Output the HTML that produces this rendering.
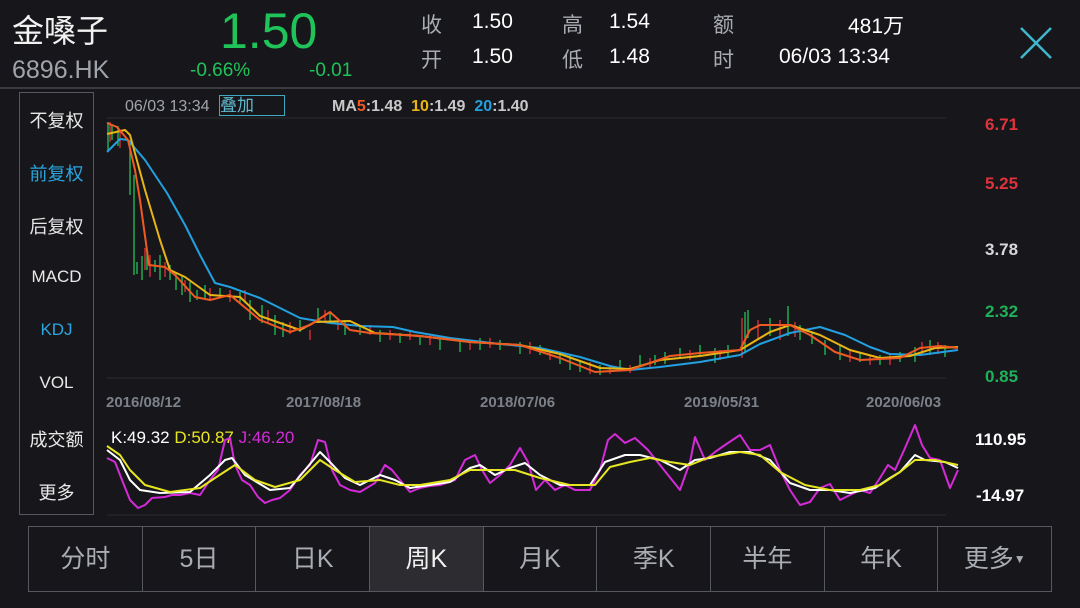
<!DOCTYPE html>
<html><head><meta charset="utf-8"><style>
body{margin:0;width:1080px;height:608px;background:#17171b;overflow:hidden;font-family:"Liberation Sans","Noto Sans CJK SC",sans-serif;position:relative;color:#fff}
.a{position:absolute;white-space:nowrap}
.g{color:#1fc35a}.lbl{color:#a9adb3}
.side{position:absolute;left:19px;top:92px;width:75px;height:423px;border:1px solid #55585e;box-sizing:border-box}
.side div{position:absolute;left:0;width:100%;text-align:center;font-size:18px;color:#e8e8e8}
.tabs{position:absolute;left:28px;top:526px;width:1024px;height:66px;border:1px solid #55585e;box-sizing:border-box;display:flex}
.tabs div{flex:1;border-right:1px solid #55585e;text-align:center;line-height:64px;font-size:25px;color:#a9adb3}
.tabs div:last-child{border-right:none}
</style></head><body>
<div class="a" style="left:12px;top:6px;font-size:32px;color:#f2f2f2">金嗓子</div>
<div class="a" style="left:12px;top:56px;font-size:25px;color:#a0a4aa">6896.HK</div>
<div class="a g" style="left:220px;top:2px;font-size:50px">1.50</div>
<div class="a g" style="left:190px;top:60px;font-size:19px">-0.66%</div>
<div class="a g" style="left:309px;top:60px;font-size:19px">-0.01</div>
<div class="a lbl" style="left:421px;top:9px;font-size:21px">收</div>
<div class="a" style="left:472px;top:10px;font-size:21px">1.50</div>
<div class="a lbl" style="left:421px;top:44px;font-size:21px">开</div>
<div class="a" style="left:472px;top:45px;font-size:21px">1.50</div>
<div class="a lbl" style="left:562px;top:9px;font-size:21px">高</div>
<div class="a" style="left:609px;top:10px;font-size:21px">1.54</div>
<div class="a lbl" style="left:562px;top:44px;font-size:21px">低</div>
<div class="a" style="left:609px;top:45px;font-size:21px">1.48</div>
<div class="a lbl" style="left:713px;top:9px;font-size:21px">额</div>
<div class="a" style="left:848px;top:10px;font-size:21px">481万</div>
<div class="a lbl" style="left:713px;top:44px;font-size:21px">时</div>
<div class="a" style="left:779px;top:45px;font-size:21px">06/03 13:34</div>
<svg class="a" style="left:1018px;top:25px" width="36" height="36"><path d="M3 3L33 33M33 3L3 33" stroke="#3fb6cc" stroke-width="2.5"/></svg>
<div class="a" style="left:0;top:87px;width:1080px;height:2px;background:#3a3b40"></div>

<div class="side">
<div style="top:14px">不复权</div>
<div style="top:67px;color:#2aa6e0">前复权</div>
<div style="top:120px">后复权</div>
<div style="top:174px;font-size:17px">MACD</div>
<div style="top:227px;color:#2aa6e0;font-size:17px">KDJ</div>
<div style="top:280px;font-size:17px">VOL</div>
<div style="top:333px">成交额</div>
<div style="top:386px">更多</div>
</div>

<div class="a" style="left:125px;top:98px;font-size:16px;color:#a0a4aa">06/03 13:34</div>
<div class="a" style="left:219px;top:95px;width:64px;height:19px;border:1px solid #3fa8c0;font-size:17px;line-height:19px;color:#5fb8cc">叠加</div>
<div class="a" style="left:332px;top:98px;font-size:16px;color:#c8c8c8;font-weight:bold">MA<span style="color:#f05a22">5</span>:1.48 &nbsp;<span style="color:#e8b515">10</span>:1.49 &nbsp;<span style="color:#23a0e0">20</span>:1.40</div>

<div class="a" style="left:985px;top:115px;font-size:17px;font-weight:bold;color:#e0323c">6.71</div>
<div class="a" style="left:985px;top:174px;font-size:17px;font-weight:bold;color:#e0323c">5.25</div>
<div class="a" style="left:985px;top:240px;font-size:17px;font-weight:bold;color:#d8d8d8">3.78</div>
<div class="a" style="left:985px;top:302px;font-size:17px;font-weight:bold;color:#1fb05a">2.32</div>
<div class="a" style="left:985px;top:367px;font-size:17px;font-weight:bold;color:#1fb05a">0.85</div>

<div class="a" style="left:106px;top:394px;font-size:15px;font-weight:bold;color:#7c8088">2016/08/12</div>
<div class="a" style="left:286px;top:394px;font-size:15px;font-weight:bold;color:#7c8088">2017/08/18</div>
<div class="a" style="left:480px;top:394px;font-size:15px;font-weight:bold;color:#7c8088">2018/07/06</div>
<div class="a" style="left:684px;top:394px;font-size:15px;font-weight:bold;color:#7c8088">2019/05/31</div>
<div class="a" style="left:866px;top:394px;font-size:15px;font-weight:bold;color:#7c8088">2020/06/03</div>

<div class="a" style="left:111px;top:428px;font-size:17px"><span style="color:#fff">K:49.32</span> <span style="color:#e6e622">D:50.87</span> <span style="color:#d42ad8">J:46.20</span></div>
<div class="a" style="left:975px;top:430px;font-size:17px;font-weight:bold">110.95</div>
<div class="a" style="left:976px;top:486px;font-size:17px;font-weight:bold">-14.97</div>

<svg class="a" style="left:0;top:0" width="1080" height="608">
<line x1="107" y1="118" x2="946" y2="118" stroke="#2c2d32"/>
<line x1="107" y1="378" x2="946" y2="378" stroke="#2c2d32"/>
<line x1="107" y1="515" x2="946" y2="515" stroke="#2c2d32"/>
<g stroke-width="1.3">
<path d="M108 122v28M112 125v15M118 126v20M130 140v55M134 175v100M137 262v12M142 256v24M147 250v20M155 260v12M160 255v25M170 265v15M176 272v18M182 275v20M190 282v20M197 290v10M205 285v15M220 288v10M240 292v12M250 300v20M262 305v18M275 315v20M283 322v15M300 320v12M318 308v15M330 312v12M345 320v15M360 325v10M380 330v12M400 333v10M420 335v10M440 338v12M460 340v12M480 338v12M500 340v10M520 342v12M540 345v10M560 352v12M570 355v15M580 360v12M600 365v10M620 360v10M640 355v12M655 355v10M665 352v12M680 348v10M700 345v12M715 348v15M728 345v12M745 312v40M748 310v28M770 318v18M788 306v30M800 325v15M812 332v12M825 340v15M840 345v15M860 352v10M880 355v10M900 352v10M915 347v15M930 340v15M945 345v12" stroke="#1fc35a"/>
<path d="M110 122v20M120 130v18M145 248v22M150 255v22M165 262v15M185 280v12M210 288v12M230 290v12M245 290v12M268 310v14M290 322v12M310 330v10M325 310v12M338 318v12M370 325v10M390 330v10M410 330v10M430 335v10M470 340v10M490 338v10M530 342v12M550 350v10M590 362v12M610 366v8M630 365v8M650 358v10M690 350v10M720 350v10M742 318v40M758 320v20M780 320v20M795 322v15M850 350v12M870 355v10M890 355v10M922 342v12M938 342v12" stroke="#e0323c"/>
</g>
<g fill="none" stroke-width="2" stroke-linejoin="round">
<polyline stroke="#23a0e0" points="107,152 120,139 128,140 145,160 167,193 185,225 200,255 215,283 230,287 260,298 300,318 330,323 360,326 393,327 415,332 450,338 500,344 540,348 580,357 610,366 630,370 660,367 700,362 740,355 760,344 790,333 820,327 845,335 870,347 890,354 920,355 958,350"/>
<polyline stroke="#e8b515" points="107,134 125,130 130,135 145,190 160,240 170,270 185,277 210,295 240,297 260,316 300,330 315,322 350,321 375,333 420,336 470,342 520,345 560,354 600,368 630,369 660,360 700,356 740,350 770,332 790,325 820,335 850,350 880,358 910,356 935,348 958,347"/>
<polyline stroke="#f05a22" points="107,123 117,127 128,140 135,170 140,200 149,265 165,267 175,275 195,297 210,300 230,295 260,320 290,332 310,325 330,312 350,330 370,333 420,336 470,342 520,345 560,358 595,372 630,370 670,356 700,353 740,350 750,330 760,325 790,325 810,335 835,352 860,360 900,358 920,348 940,346 958,348"/>
</g>
<g fill="none" stroke-width="2" stroke-linejoin="round">
<polyline stroke="#d42ad8" points="107,458 115,462 122,480 130,500 138,508 145,505 152,498 165,497 172,495 180,495 190,493 200,495 210,480 218,470 225,440 230,438 235,465 242,480 250,485 258,497 265,503 272,500 280,498 290,490 300,475 310,465 318,440 325,442 332,470 340,485 350,490 360,492 375,483 385,465 392,470 400,480 410,492 420,488 430,486 440,485 455,480 465,460 475,455 482,470 490,483 500,475 510,465 520,448 528,462 536,490 545,480 555,490 565,485 575,490 590,490 600,470 608,440 615,434 625,443 635,438 648,450 660,465 672,480 680,490 690,462 695,437 705,460 715,452 725,445 740,435 750,450 760,450 770,445 780,470 790,490 800,505 810,502 820,488 830,484 840,500 850,495 860,490 870,493 880,478 888,465 895,470 905,448 915,425 922,445 930,458 940,460 950,488 958,470"/>
<polyline stroke="#ffffff" points="107,450 120,460 130,480 140,490 160,493 190,492 210,475 225,460 232,458 245,475 270,490 290,488 305,470 320,452 330,462 345,478 360,485 380,475 395,480 410,488 430,485 450,482 470,468 480,465 495,475 510,468 525,463 540,475 560,485 590,485 605,462 625,455 640,455 660,460 680,470 695,460 710,458 730,452 750,452 770,460 790,483 810,490 830,490 850,493 875,488 890,478 900,472 915,455 925,460 945,462 958,468"/>
<polyline stroke="#e6e622" points="107,446 120,455 130,470 145,485 170,492 200,488 215,478 235,465 255,480 275,487 300,480 320,460 335,470 355,482 380,480 400,485 420,485 450,480 470,470 490,470 515,470 540,478 570,485 595,485 610,467 630,462 650,458 670,462 690,465 710,457 740,452 760,455 780,472 805,485 830,490 860,490 880,485 900,472 915,460 935,460 958,465"/>
</g>
</svg>

<div class="tabs">
<div>分时</div><div>5日</div><div>日K</div><div style="background:#2c2c31;color:#f0f0f0">周K</div><div>月K</div><div>季K</div><div>半年</div><div>年K</div><div>更多<span style="font-size:12px;vertical-align:4px">▼</span></div>
</div>
</body></html>
